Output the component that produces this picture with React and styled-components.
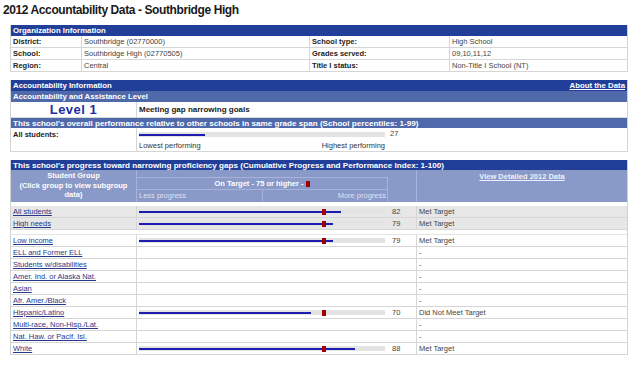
import React from "react";
import styled, { createGlobalStyle } from "styled-components";

const GlobalStyle = createGlobalStyle`
  body {
    margin: 0;
    background: #fff;
    font-family: "Liberation Sans", Arial, sans-serif;
    color: #333;
  }
`;

const Page = styled.div`
  width: 640px;
  height: 368px;
  overflow: hidden;
`;

const Title = styled.h1`
  margin: 0;
  height: 25px;
  box-sizing: border-box;
  padding: 4px 0 0 3px;
  font-size: 12px;
  line-height: 12px;
  letter-spacing: -0.4px;
  font-weight: bold;
  color: #1a1a1a;
`;

const Section = styled.div`
  width: 618px;
  margin: 0 0 ${(p) => p.$gap || 8}px 10px;
  box-sizing: border-box;
  border-left: 1px solid #d2d2d2;
  border-right: 1px solid #d2d2d2;
  font-size: 7.5px;
`;

const HeadBar = styled.div`
  display: flex;
  justify-content: space-between;
  align-items: center;
  height: ${(p) => p.$h || 11}px;
  padding: 0 2px;
  background: ${(p) => (p.$light ? "#4f69ab" : "#213f98")};
  color: #fff;
  font-weight: bold;
  font-size: ${(p) => (p.$long ? 8.1 : 7.8)}px;
  white-space: nowrap;
`;

const HeadLink = styled.a`
  color: #fff;
  text-decoration: underline;
`;

const Row = styled.div`
  display: flex;
  height: ${(p) => p.$h || 12}px;
  box-sizing: border-box;
  border-bottom: 1px solid #d6d6d6;
  background: ${(p) => (p.$shade ? "#e7e7e7" : "#fff")};
`;

const Cell = styled.div`
  flex: none;
  width: ${(p) => p.$w}px;
  box-sizing: border-box;
  padding-left: 2px;
  border-right: ${(p) => (p.$open ? "none" : "1px solid #d6d6d6")};
  line-height: 11px;
  font-weight: ${(p) => (p.$bold ? "bold" : "normal")};
  color: ${(p) => (p.$bold ? "#222" : "#444")};
  white-space: nowrap;
  overflow: hidden;
`;

const LevelCell = styled.div`
  flex: none;
  width: 126px;
  box-sizing: border-box;
  border-right: 1px solid #d6d6d6;
  text-align: center;
  font-size: 13px;
  line-height: 15px;
  letter-spacing: 0.5px;
  font-weight: bold;
  color: #1c2fa3;
`;

const LevelText = styled.div`
  padding-left: 2px;
  font-size: 8px;
  line-height: 15px;
  font-weight: bold;
  color: #1a1a1a;
`;

const PerfLabel = styled.div`
  flex: none;
  width: 126px;
  box-sizing: border-box;
  padding: 2px 0 0 2px;
  border-right: 1px solid #d6d6d6;
  font-weight: bold;
  color: #222;
`;

const PerfBody = styled.div`
  flex: none;
  width: 251px;
  padding: 4px 0 0 2px;
  box-sizing: border-box;
`;

const PerfScale = styled.div`
  display: flex;
  justify-content: space-between;
  width: 246px;
  margin-top: 4px;
  color: #333;
`;

const PerfNum = styled.div`
  padding: 1px 0 0 2px;
  color: #444;
`;

const Track = styled.div`
  position: relative;
  width: 246px;
  height: 5px;
  background: #e3e3e3;
`;

const Fill = styled.div`
  position: absolute;
  left: 0;
  top: 1.5px;
  height: 2px;
  width: ${(p) => p.$value}%;
  background: #1c1cae;
`;

const Marker = styled.div`
  position: absolute;
  left: calc(75% - 2px);
  top: -0.5px;
  width: 4px;
  height: 6px;
  background: #a00000;
`;

const ColHead = styled.div`
  display: flex;
  height: 32px;
  background: #8999c8;
  color: #fff;
  border-bottom: 4px solid #fff;
  box-sizing: content-box;
`;

const GroupHead = styled.div`
  flex: none;
  width: 126px;
  box-sizing: border-box;
  border-right: 1px solid #a7b3da;
  padding-top: 1px;
  text-align: center;
  font-weight: bold;
  line-height: 9.5px;
`;

const TargetCell = styled.div`
  flex: none;
  width: 280px;
  box-sizing: border-box;
  border-right: 1px solid #a7b3da;
  padding-top: 7px;
`;

const TargetBox = styled.div`
  width: 251px;
  border-top: 1px solid #a7b3da;
  border-right: 1px solid #a7b3da;
  box-sizing: border-box;
`;

const TargetTitle = styled.div`
  height: 11px;
  line-height: 11px;
  border-bottom: 1px solid #a7b3da;
  text-align: center;
  font-weight: bold;
`;

const RedSquare = styled.span`
  display: inline-block;
  width: 4px;
  height: 6px;
  margin-left: 2px;
  vertical-align: -0.5px;
  background: #a00000;
`;

const ProgressScale = styled.div`
  display: flex;
  height: 12px;
  line-height: 11px;
  color: #dde2f2;
`;

const ScaleHalf = styled.div`
  flex: 1;
  padding: 0 1px 0 2px;
  text-align: ${(p) => (p.$right ? "right" : "left")};
  border-right: ${(p) => (p.$right ? "none" : "1px solid #a7b3da")};
`;

const DetailHead = styled.div`
  flex: 1;
  padding-top: 2px;
  text-align: center;
  font-weight: bold;
`;

const DetailLink = styled.a`
  color: #eef1fa;
  text-decoration: underline;
`;

const GroupLink = styled.a`
  color: #28388a;
  text-decoration: underline;
`;

const BarCell = styled.div`
  flex: none;
  width: 251px;
  box-sizing: border-box;
  padding: 3px 0 0 2px;
`;

const Gap = styled.div`
  height: 5px;
  border-bottom: 1px solid #e4e4e4;
  box-sizing: border-box;
`;

const shaded = [
  { name: "All students", value: 82, status: "Met Target" },
  { name: "High needs", value: 79, status: "Met Target" },
];

const others = [
  { name: "Low income", value: 79, status: "Met Target" },
  { name: "ELL and Former ELL" },
  { name: "Students w/disabilities" },
  { name: "Amer. Ind. or Alaska Nat." },
  { name: "Asian" },
  { name: "Afr. Amer./Black" },
  { name: "Hispanic/Latino", value: 70, status: "Did Not Meet Target" },
  { name: "Multi-race, Non-Hisp./Lat." },
  { name: "Nat. Haw. or Pacif. Isl." },
  { name: "White", value: 88, status: "Met Target" },
];

function GroupRow({ group, shade }) {
  return (
    <Row $shade={shade}>
      <Cell $w={126}>
        <GroupLink href="#">{group.name}</GroupLink>
      </Cell>
      {group.value ? (
        <BarCell>
          <Track>
            <Fill $value={group.value} />
            <Marker />
          </Track>
        </BarCell>
      ) : (
        <Cell $w={251} $open />
      )}
      <Cell $w={29}>{group.value ? <>&nbsp;{group.value}</> : null}</Cell>
      <Cell $w={210} $open>
        {group.status || "-"}
      </Cell>
    </Row>
  );
}

export default function App() {
  return (
    <Page>
      <GlobalStyle />
      <Title>2012 Accountability Data - Southbridge High</Title>

      <Section>
        <HeadBar>Organization Information</HeadBar>
        <Row>
          <Cell $w={71} $bold>District:</Cell>
          <Cell $w={228}>Southbridge (02770000)</Cell>
          <Cell $w={140} $bold>School type:</Cell>
          <Cell $w={177} $open>High School</Cell>
        </Row>
        <Row>
          <Cell $w={71} $bold>School:</Cell>
          <Cell $w={228}>Southbridge High (02770505)</Cell>
          <Cell $w={140} $bold>Grades served:</Cell>
          <Cell $w={177} $open>09,10,11,12</Cell>
        </Row>
        <Row>
          <Cell $w={71} $bold>Region:</Cell>
          <Cell $w={228}>Central</Cell>
          <Cell $w={140} $bold>Title I status:</Cell>
          <Cell $w={177} $open>Non-Title I School (NT)</Cell>
        </Row>
      </Section>

      <Section>
        <HeadBar>
          Accountability Information
          <HeadLink href="#">About the Data</HeadLink>
        </HeadBar>
        <HeadBar $light>Accountability and Assistance Level</HeadBar>
        <Row $h={16}>
          <LevelCell>Level 1</LevelCell>
          <LevelText>Meeting gap narrowing goals</LevelText>
        </Row>
        <HeadBar $light $long $h={10}>
          This school's overall performance relative to other schools in same grade span (School percentiles: 1-99)
        </HeadBar>
        <Row $h={24}>
          <PerfLabel>All students:</PerfLabel>
          <PerfBody>
            <Track>
              <Fill $value={27} />
            </Track>
            <PerfScale>
              <span>Lowest performing</span>
              <span>Highest performing</span>
            </PerfScale>
          </PerfBody>
          <PerfNum>27</PerfNum>
        </Row>
      </Section>

      <Section>
        <HeadBar $long $h={10}>
          This school's progress toward narrowing proficiency gaps (Cumulative Progress and Performance Index: 1-100)
        </HeadBar>
        <ColHead>
          <GroupHead>
            Student Group
            <br />
            (Click group to view subgroup
            <br />
            data)
          </GroupHead>
          <TargetCell>
            <TargetBox>
              <TargetTitle>
                On Target - 75 or higher -<RedSquare />
              </TargetTitle>
              <ProgressScale>
                <ScaleHalf>Less progress</ScaleHalf>
                <ScaleHalf $right>More progress</ScaleHalf>
              </ProgressScale>
            </TargetBox>
          </TargetCell>
          <DetailHead>
            <DetailLink href="#">View Detailed 2012 Data</DetailLink>
          </DetailHead>
        </ColHead>
        {shaded.map((g) => (
          <GroupRow key={g.name} group={g} shade />
        ))}
        <Gap />
        {others.map((g) => (
          <GroupRow key={g.name} group={g} />
        ))}
      </Section>
    </Page>
  );
}
